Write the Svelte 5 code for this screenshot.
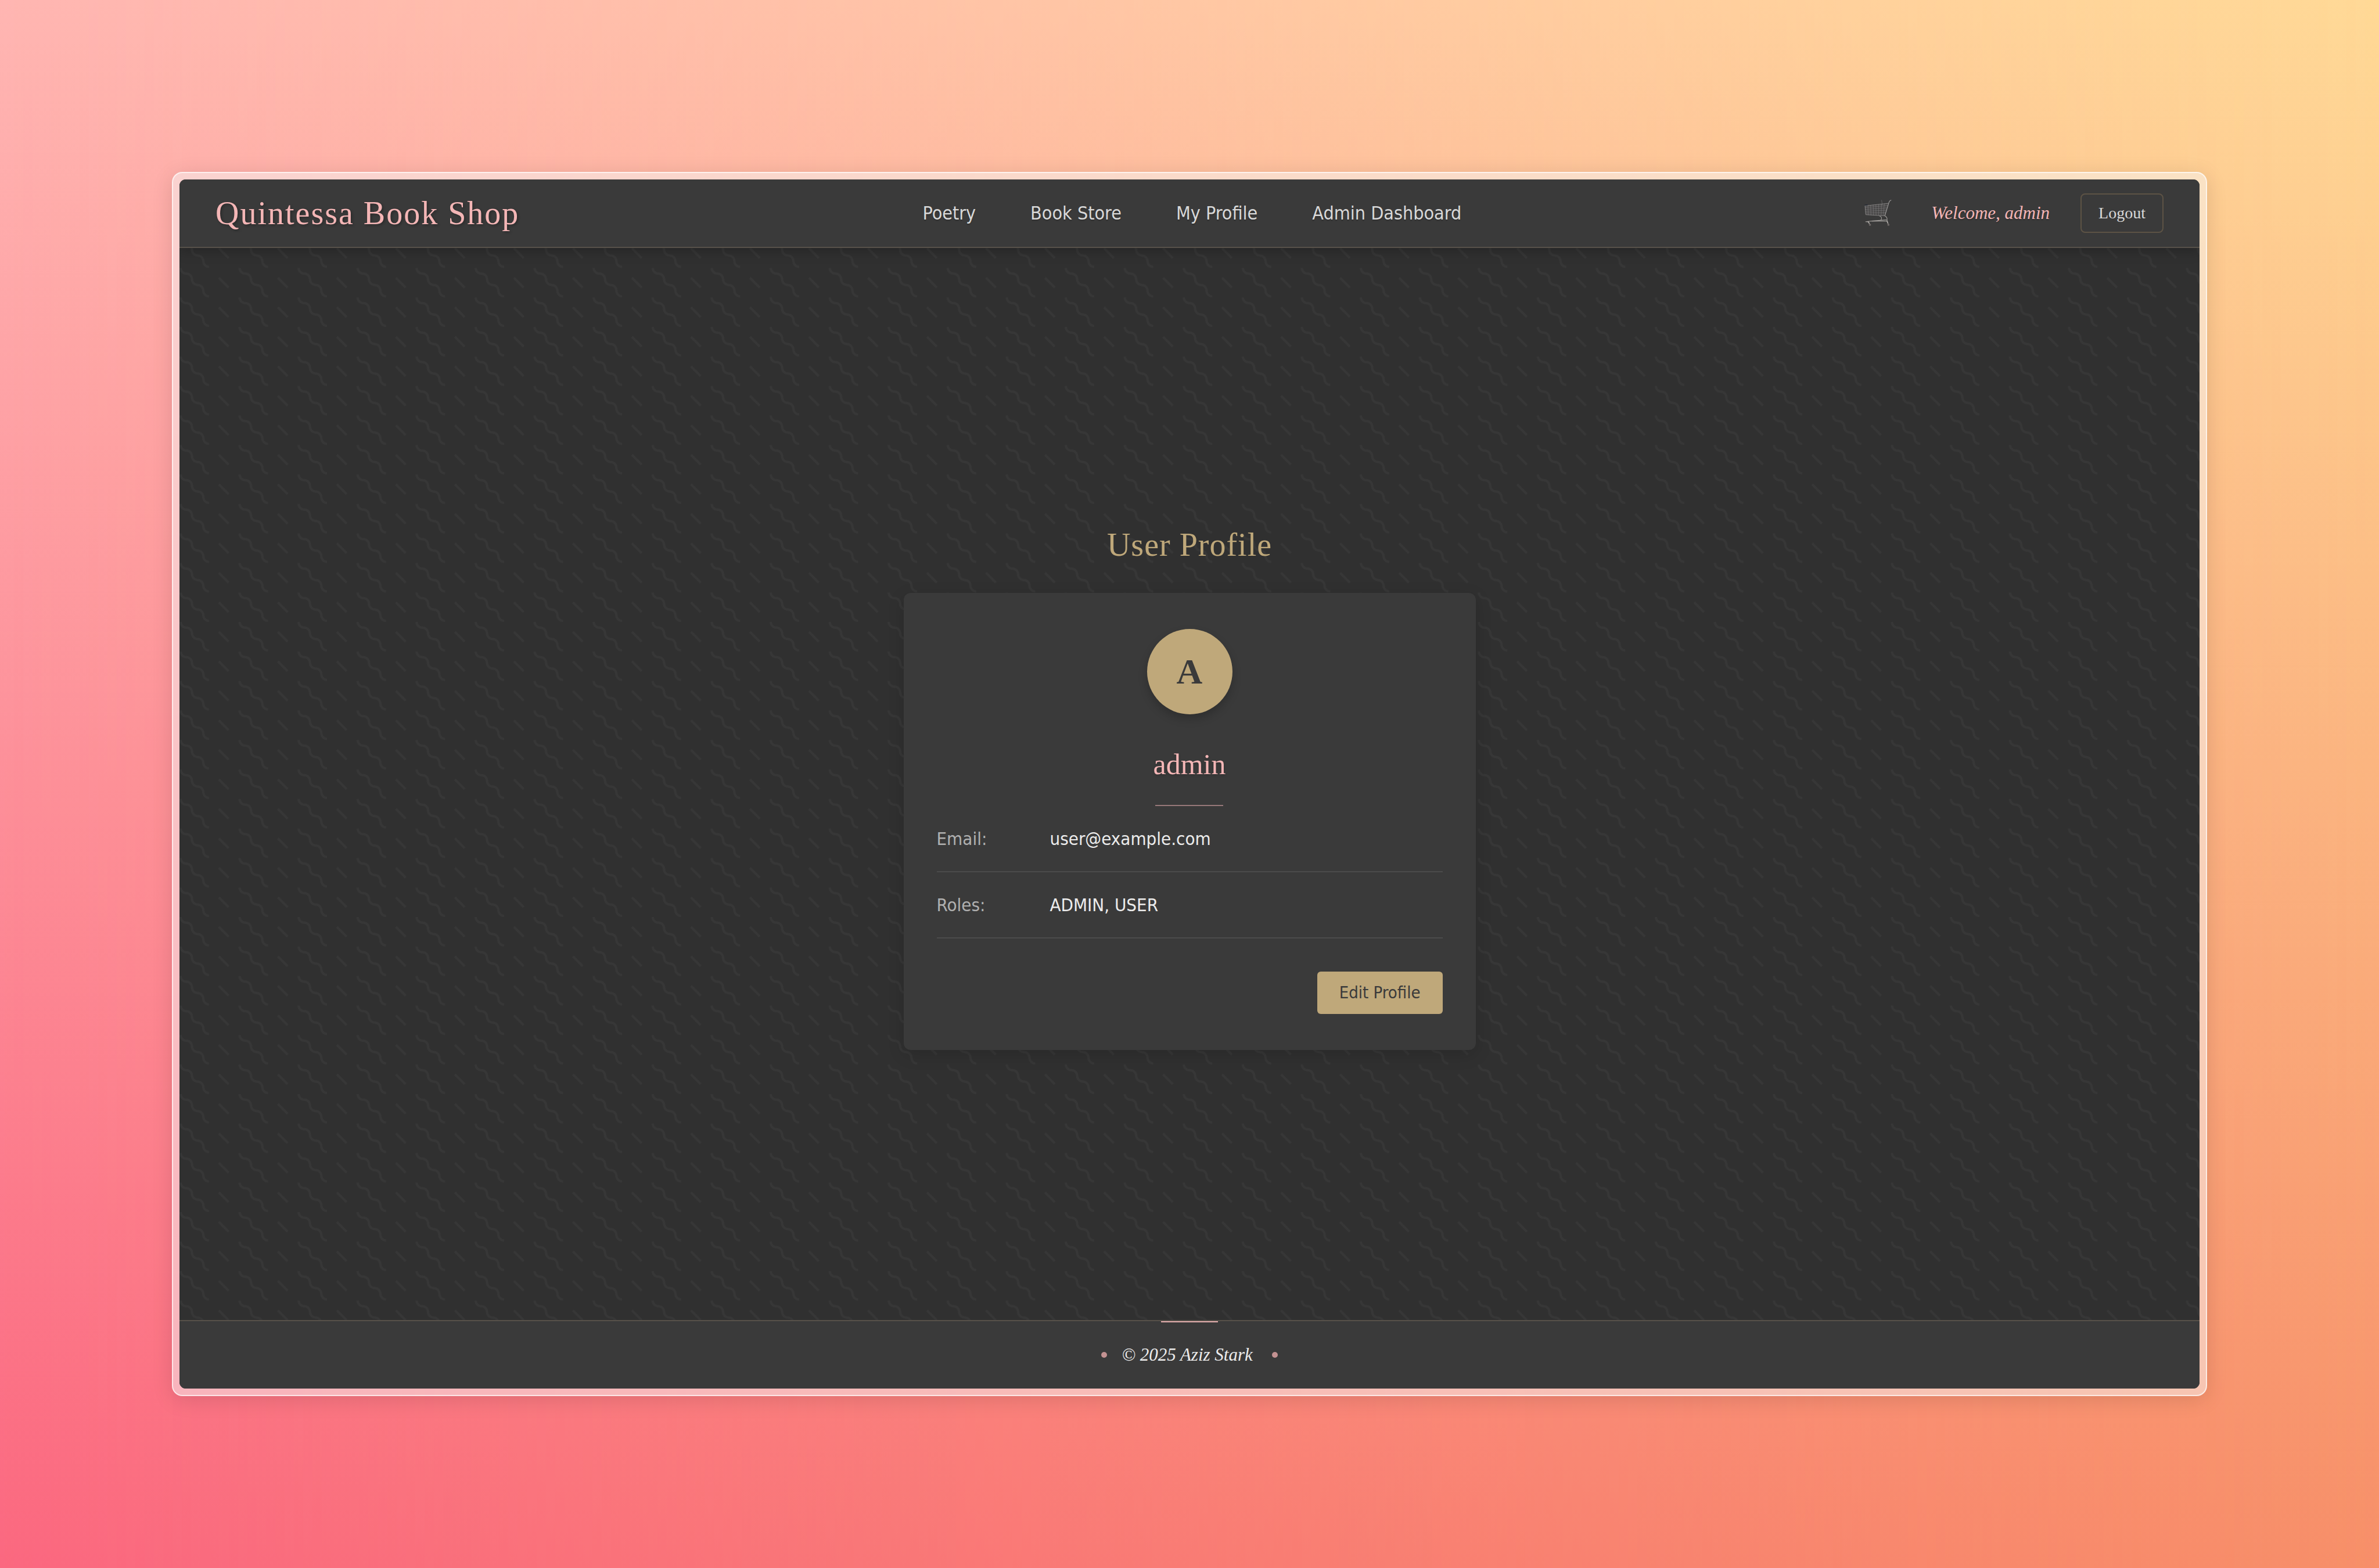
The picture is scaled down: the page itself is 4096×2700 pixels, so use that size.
<script>
  const links = ['Poetry', 'Book Store', 'My Profile', 'Admin Dashboard'];
  const user = { name: 'admin', email: 'user@example.com', roles: ['ADMIN', 'USER'] };
  const details = [
    { label: 'Email:', value: user.email },
    { label: 'Roles:', value: user.roles.join(', ') }
  ];
</script>

<div class="backdrop">
  <div class="frame">
    <div class="app">
      <svg class="pattern" viewBox="0 0 1780 1066" preserveAspectRatio="xMinYMin slice" aria-hidden="true">
        <defs>
          <pattern id="wiggle" width="52" height="26" patternUnits="userSpaceOnUse">
            <path
              d="M10 10c0-2.21-1.79-4-4-4-3.314 0-6-2.686-6-6h2c0 2.21 1.79 4 4 4 3.314 0 6 2.686 6 6 0 2.21 1.79 4 4 4 3.314 0 6 2.686 6 6 0 2.21 1.79 4 4 4v2c-3.314 0-6-2.686-6-6 0-2.21-1.79-4-4-4-3.314 0-6-2.686-6-6zm25.464-1.95l8.486 8.486-1.414 1.414-8.486-8.486 1.414-1.414z"
              fill="#373737"
            />
          </pattern>
        </defs>
        <rect width="1780" height="1066" fill="url(#wiggle)" />
      </svg>

      <header>
        <a class="brand" href="#home">Quintessa Book Shop</a>
        <nav aria-label="Main">
          {#each links as link}
            <a href="#{link.toLowerCase().replace(' ', '-')}">{link}</a>
          {/each}
        </nav>
        <div class="account">
          <a class="cart" href="#cart" aria-label="Cart">
            <svg viewBox="76 54 176 172" fill="none" stroke-linecap="round" stroke-linejoin="round">
              <path d="M80 93 229 77 208 156 85 150Z" fill="#5a5859" fill-opacity=".45" />
              <g stroke="#858384" stroke-width="2">
                <path d="M81 104 225 91M82 116 221 106M83 128 217 121M84 139 212 137" />
                <path d="M99 91 101 151M116 89 118 152M133 87 135 152M150 86 151 153M168 84 168 154M186 82 184 154M205 80 197 155M187 57 191 86" />
              </g>
              <path d="M81 93 229 77M80 92 85 150 207 157" stroke="#969494" stroke-width="3" />
              <path d="M248 57C240 58 236 65 233 75L208 156" stroke="#a3a1a0" stroke-width="4" />
              <path d="M80 89 94 87" stroke="#262b35" stroke-width="7" />
              <path d="M174 159C187 162 190 175 183 183M208 158C221 163 224 176 222 191M84 195 130 190 222 182M84 195 104 197M125 192 222 190" stroke="#9d9a97" stroke-width="4" />
              <path d="M102 197 110 212M222 191 230 212" stroke="#b3afab" stroke-width="6" />
              <circle cx="112" cy="215" r="7" fill="#777271" stroke="#4b4746" stroke-width="3" />
              <circle cx="231" cy="215" r="7" fill="#777271" stroke="#4b4746" stroke-width="3" />
            </svg>
          </a>
          <span class="welcome">Welcome, {user.name}</span>
          <button class="logout" type="button">Logout</button>
        </div>
      </header>

      <main>
        <h1>User Profile</h1>
        <section class="card">
          <div class="avatar">{user.name[0].toUpperCase()}</div>
          <h2>{user.name}</h2>
          <dl>
            {#each details as item}
              <div class="row">
                <dt>{item.label}</dt>
                <dd>{item.value}</dd>
              </div>
            {/each}
          </dl>
          <button class="edit" type="button">Edit Profile</button>
        </section>
      </main>

      <footer>
        <p>© 2025 Aziz Stark&nbsp;</p>
      </footer>
    </div>
  </div>
</div>

<style>
  .backdrop {
    position: relative;
    z-index: 0;
    box-sizing: border-box;
    display: flex;
    min-height: 100vh;
    padding: 296px;
    background: linear-gradient(#ffb6b2, #fb6880);
    font-family: 'DejaVu Sans Condensed', 'Noto Sans', sans-serif;
    font-size: 31px;
    line-height: 50px;
  }
  .backdrop::before {
    content: '';
    position: absolute;
    inset: 0;
    z-index: -1;
    background: linear-gradient(#ffd996, #f78f68);
    mask-image: linear-gradient(to right, transparent, #000);
  }
  .frame {
    flex: 1;
    display: flex;
    padding: 11px;
    border: 2px solid rgba(255, 255, 255, 0.65);
    border-radius: 18px;
    background: rgba(246, 246, 246, 0.5);
    box-shadow: 0 6px 36px rgba(0, 0, 0, 0.12);
  }
  .app {
    position: relative;
    z-index: 0;
    flex: 1;
    display: flex;
    flex-direction: column;
    overflow: hidden;
    border-radius: 11px;
    background: #303030;
  }
  .pattern {
    position: absolute;
    inset: 0;
    z-index: -1;
    width: 100%;
    height: 100%;
  }
  a {
    color: inherit;
    text-decoration: none;
  }
  button {
    font: inherit;
    cursor: pointer;
  }
  header {
    display: flex;
    align-items: center;
    justify-content: space-between;
    box-sizing: border-box;
    min-height: 118px;
    padding: 0 62px;
    border-bottom: 2px solid #57514a;
    background: #3a3a3a;
    box-shadow: 0 4px 20px rgba(0, 0, 0, 0.25);
  }
  .brand {
    color: #f4b6b6;
    font: 56px/90px 'Liberation Serif', serif;
    letter-spacing: 2px;
    text-shadow: 2px 2px 4px rgba(0, 0, 0, 0.3);
  }
  nav {
    display: flex;
    gap: 94px;
    color: #d8d8d8;
    font-size: 32px;
    text-shadow: 0 2px 2px rgba(0, 0, 0, 0.2);
  }
  .account {
    display: flex;
    align-items: center;
    font-family: 'Liberation Serif', serif;
  }
  .cart {
    display: flex;
    margin-right: 68px;
  }
  .cart svg {
    width: 47px;
    height: 46px;
  }
  .welcome {
    margin-right: 53px;
    color: #f4b6b6;
    font-style: italic;
    text-shadow: 0 2px 2px rgba(0, 0, 0, 0.2);
  }
  .logout {
    padding: 8px 29px;
    border: 2px solid #5d5345;
    border-radius: 8px;
    background: none;
    color: #d8d8d8;
    font-size: 28px;
    line-height: 48px;
  }
  main {
    flex: 1;
    display: flex;
    flex-direction: column;
    align-items: center;
    justify-content: center;
  }
  h1 {
    margin: 0 0 38px;
    color: #bfa87a;
    font: 56px/90px 'Liberation Serif', serif;
    letter-spacing: 1px;
  }
  .card {
    box-sizing: border-box;
    display: flex;
    flex-direction: column;
    align-items: center;
    width: 100%;
    max-width: 985px;
    padding: 62px 57px;
    border-radius: 12px;
    background: #3a3a3a;
    box-shadow: 0 8px 28px rgba(0, 0, 0, 0.15);
  }
  .avatar {
    display: grid;
    place-items: center;
    width: 147px;
    height: 147px;
    margin-bottom: 46px;
    border-radius: 50%;
    background: #bfa87a;
    box-shadow: 0 8px 16px rgba(0, 0, 0, 0.2);
    color: #3a3a3a;
    font: bold 62px/62px 'Liberation Serif', serif;
  }
  h2 {
    margin: 0;
    color: #f4b6b6;
    font: 50px/80px 'Liberation Serif', serif;
    text-shadow: 0 2px 4px rgba(0, 0, 0, 0.2);
  }
  h2::after {
    content: '';
    display: block;
    width: 117px;
    height: 2px;
    margin: 30px auto 0;
    background: #977879;
  }
  dl {
    width: 100%;
    margin: 0;
  }
  .row {
    display: flex;
    padding: 31px 0;
    border-bottom: 2px solid #4b4b4b;
  }
  dt {
    flex: none;
    width: 195px;
    color: #b0b0b0;
  }
  dd {
    margin: 0;
    color: #ececec;
  }
  .edit {
    align-self: flex-end;
    margin-top: 57px;
    padding: 14px 38px;
    border: 0;
    border-radius: 6px;
    background: #bfa87a;
    color: #3a3a3a;
    font-size: 29px;
    line-height: 45px;
  }
  footer {
    position: relative;
    display: flex;
    justify-content: center;
    padding: 33px 62px;
    border-top: 2px solid #57514a;
    background: #3a3a3a;
  }
  footer::before {
    content: '';
    position: absolute;
    top: 0;
    left: 50%;
    width: 98px;
    height: 2px;
    margin-left: -49px;
    background: #e6b0b0;
  }
  footer p {
    display: flex;
    align-items: center;
    gap: 25px;
    margin: 0;
    color: #ececec;
    font-family: 'Liberation Serif', serif;
    font-style: italic;
  }
  footer p::before,
  footer p::after {
    content: '';
    width: 10px;
    height: 10px;
    border-radius: 50%;
    background: #c39292;
  }
</style>
